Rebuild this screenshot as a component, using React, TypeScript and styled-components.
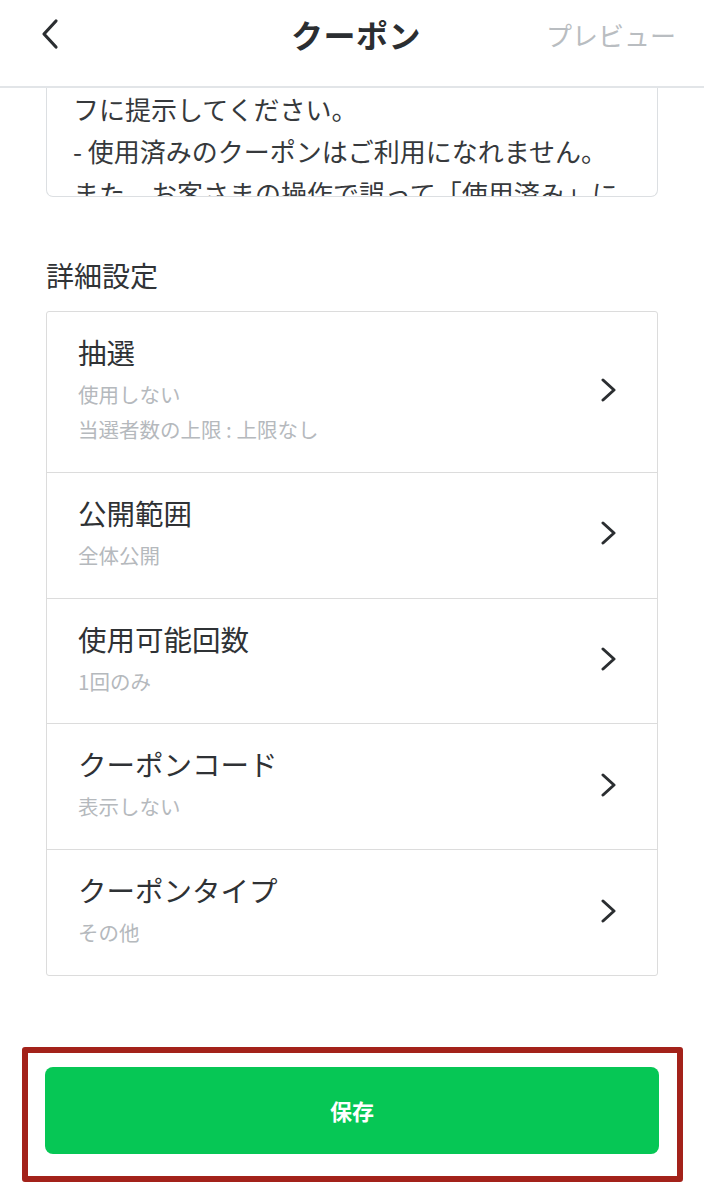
import React from "react";
import styled, { createGlobalStyle } from "styled-components";

const GlobalStyle = createGlobalStyle`
  body {
    margin: 0;
    background: #fff;
    font-family: "Noto Sans CJK JP", "Noto Sans", sans-serif;
    color: #2f3235;
  }
`;

const Page = styled.div`
  width: 704px;
  min-height: 1200px;
  background: #fff;
`;

const Header = styled.header`
  height: 88px;
  box-sizing: border-box;
  display: grid;
  grid-template-columns: 1fr auto 1fr;
  align-items: center;
  padding: 0 28px 18px 36px;
  border-bottom: 2px solid #e2e5e8;
`;

const BackButton = styled.button`
  justify-self: start;
  background: none;
  border: 0;
  padding: 0;
  width: 28px;
  height: 34px;
  display: flex;
  align-items: center;
  justify-content: center;
`;

const Title = styled.h1`
  margin: 0;
  font-size: 32px;
  font-weight: 700;
  color: #2b2e31;
  letter-spacing: 0.5px;
`;

const HeaderAction = styled.span`
  justify-self: end;
  font-size: 26px;
  color: #b9bdc1;
`;

const Body = styled.main`
  padding: 0 46px;
`;

// scrolled text area: only the last lines are in view
const NoteBox = styled.div`
  height: 108px;
  overflow: hidden;
  border: 1px solid #dcdfe2;
  border-top: 0;
  border-radius: 0 0 7px 7px;
  padding: 0 26px;
  font-size: 26px;
  line-height: 42px;
  color: #36393c;
`;

const NoteLine = styled.div`
  white-space: nowrap;
`;

const SectionLabel = styled.h2`
  margin: 58px 0 16px;
  font-size: 28px;
  font-weight: 400;
  line-height: 40px;
  color: #303336;
`;

const List = styled.div`
  border: 1px solid #dcdcdc;
  border-radius: 3px;
`;

const Row = styled.div`
  display: flex;
  align-items: center;
  padding: 21px 40px 24.8px 31px;
  border-bottom: 1px solid #dcdcdc;
  &:last-child {
    border-bottom: 0;
  }
`;

const RowText = styled.div`
  flex: 1;
  display: flex;
  flex-direction: column;
`;

const RowTitle = styled.div`
  font-size: 28.5px;
  line-height: 38px;
  color: #2f3235;
  margin-bottom: 6px;
`;

const RowSub = styled.div`
  font-size: 20.5px;
  line-height: 35px;
  color: #b5b9bd;
`;

const SaveArea = styled.div`
  margin: 71px 21px 0 22px;
  border: 6px solid #a3221a;
  border-radius: 3px;
  padding: 14px 18px 22px 17px;
`;

const SaveButton = styled.button`
  display: block;
  width: 100%;
  height: 87px;
  border: 0;
  border-radius: 8px;
  background: #06c755;
  color: #fff;
  font-family: "Noto Sans CJK JP", sans-serif;
  font-size: 22px;
  font-weight: 700;
`;

const Chevron = ({ dir }: { dir: "left" | "right" }) =>
  dir === "left" ? (
    <svg width="22" height="32" viewBox="0 0 22 32">
      <path d="M17 3 L5 16 L17 29" fill="none" stroke="#2b2e31" strokeWidth="3.2" strokeLinecap="round" strokeLinejoin="round" />
    </svg>
  ) : (
    <svg width="16" height="24" viewBox="0 0 16 24">
      <path d="M2 2 L13 12 L2 22" fill="none" stroke="#2b2e31" strokeWidth="3" strokeLinecap="round" strokeLinejoin="round" />
    </svg>
  );

const settings = [
  { title: "抽選", subs: ["使用しない", "当選者数の上限 : 上限なし"] },
  { title: "公開範囲", subs: ["全体公開"] },
  { title: "使用可能回数", subs: ["1回のみ"] },
  { title: "クーポンコード", subs: ["表示しない"] },
  { title: "クーポンタイプ", subs: ["その他"] },
];

export default function App() {
  return (
    <Page>
      <GlobalStyle />
      <Header>
        <BackButton aria-label="戻る">
          <Chevron dir="left" />
        </BackButton>
        <Title>クーポン</Title>
        <HeaderAction>プレビュー</HeaderAction>
      </Header>
      <Body>
        <NoteBox>
          <NoteLine>フに提示してください。</NoteLine>
          <NoteLine>- 使用済みのクーポンはご利用になれません。</NoteLine>
          <NoteLine>また、お客さまの操作で誤って「使用済み」に</NoteLine>
        </NoteBox>

        <SectionLabel>詳細設定</SectionLabel>
        <List>
          {settings.map((s) => (
            <Row key={s.title}>
              <RowText>
                <RowTitle>{s.title}</RowTitle>
                {s.subs.map((t) => (
                  <RowSub key={t}>{t}</RowSub>
                ))}
              </RowText>
              <Chevron dir="right" />
            </Row>
          ))}
        </List>
      </Body>
      <SaveArea>
        <SaveButton>保存</SaveButton>
      </SaveArea>
    </Page>
  );
}
